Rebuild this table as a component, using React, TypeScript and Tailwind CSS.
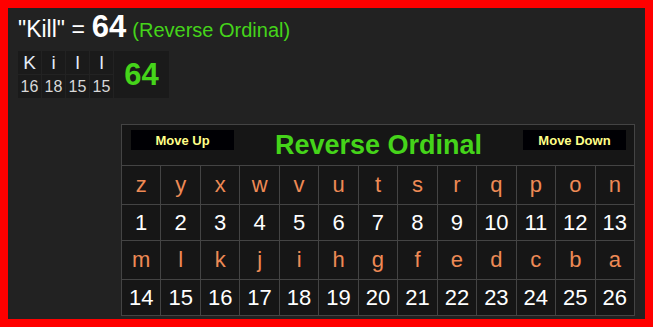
import React from "react";

const letters1 = ["z","y","x","w","v","u","t","s","r","q","p","o","n"];
const letters2 = ["m","l","k","j","i","h","g","f","e","d","c","b","a"];

export default function App() {
  const font = { fontFamily: '"Liberation Sans", Arial, sans-serif' };
  return (
    <div style={font} className="w-[653px] h-[327px] border-8 border-[#ff0000] bg-[#222222] px-[10px] pt-[3px] box-border overflow-hidden">
      <div className="flex items-baseline h-[30px] leading-none">
        <span className="text-[23px] text-white">"Kill" =</span>
        <span className="text-[31px] font-bold text-white ml-[7px]">64</span>
        <span className="text-[20px] text-[#45d41a] ml-[6px]">(Reverse Ordinal)</span>
      </div>
      <div className="mt-[10px] inline-grid grid-cols-[23px_23px_23px_23px_55px] grid-rows-[23px_23px] gap-px bg-[#222222] leading-none">
        {["K","i","l","l"].map((c, i) => (
          <div key={"l" + i} className="bg-[#1a1a1a] flex items-center justify-center text-[19px] text-[#e4ecf8]">{c}</div>
        ))}
        <div className="row-span-2 col-start-5 row-start-1 bg-[#1a1a1a] flex items-center justify-center text-[31px] font-bold text-[#45d41a]">64</div>
        {["16","18","15","15"].map((c, i) => (
          <div key={"n" + i} className="bg-[#1a1a1a] flex items-center justify-center text-[16px] text-[#d8d8d8]">{c}</div>
        ))}
      </div>
      <div className="flex justify-end mt-[26px]">
        <div className="w-[514px] border border-[#444444] bg-[#444444] grid grid-cols-13 gap-px leading-none">
          <div className="col-span-13 h-[40px] bg-[#161616] flex justify-between items-start pl-[9px] pr-[8px]">
            <div className="mt-[5px] w-[103px] h-[20px] bg-[#000004] flex items-center justify-center text-[13px] font-bold text-[#ffff88]">Move Up</div>
            <div className="self-center text-[27px] font-bold text-[#45d41a]">Reverse Ordinal</div>
            <div className="mt-[5px] w-[103px] h-[20px] bg-[#000004] flex items-center justify-center text-[13px] font-bold text-[#ffff88]">Move Down</div>
          </div>
          {letters1.map((c) => (
            <div key={"a" + c} className="h-[38px] bg-[#161616] flex items-center justify-center text-[22px] text-[#ee8a55]">{c}</div>
          ))}
          {letters1.map((_, i) => (
            <div key={"b" + i} className="h-[35px] bg-[#161616] flex items-center justify-center text-[22px] text-white">{i + 1}</div>
          ))}
          {letters2.map((c) => (
            <div key={"c" + c} className="h-[38px] bg-[#161616] flex items-center justify-center text-[22px] text-[#ee8a55]">{c}</div>
          ))}
          {letters2.map((_, i) => (
            <div key={"d" + i} className="h-[35px] bg-[#161616] flex items-center justify-center text-[22px] text-white">{i + 14}</div>
          ))}
        </div>
      </div>
    </div>
  );
}
